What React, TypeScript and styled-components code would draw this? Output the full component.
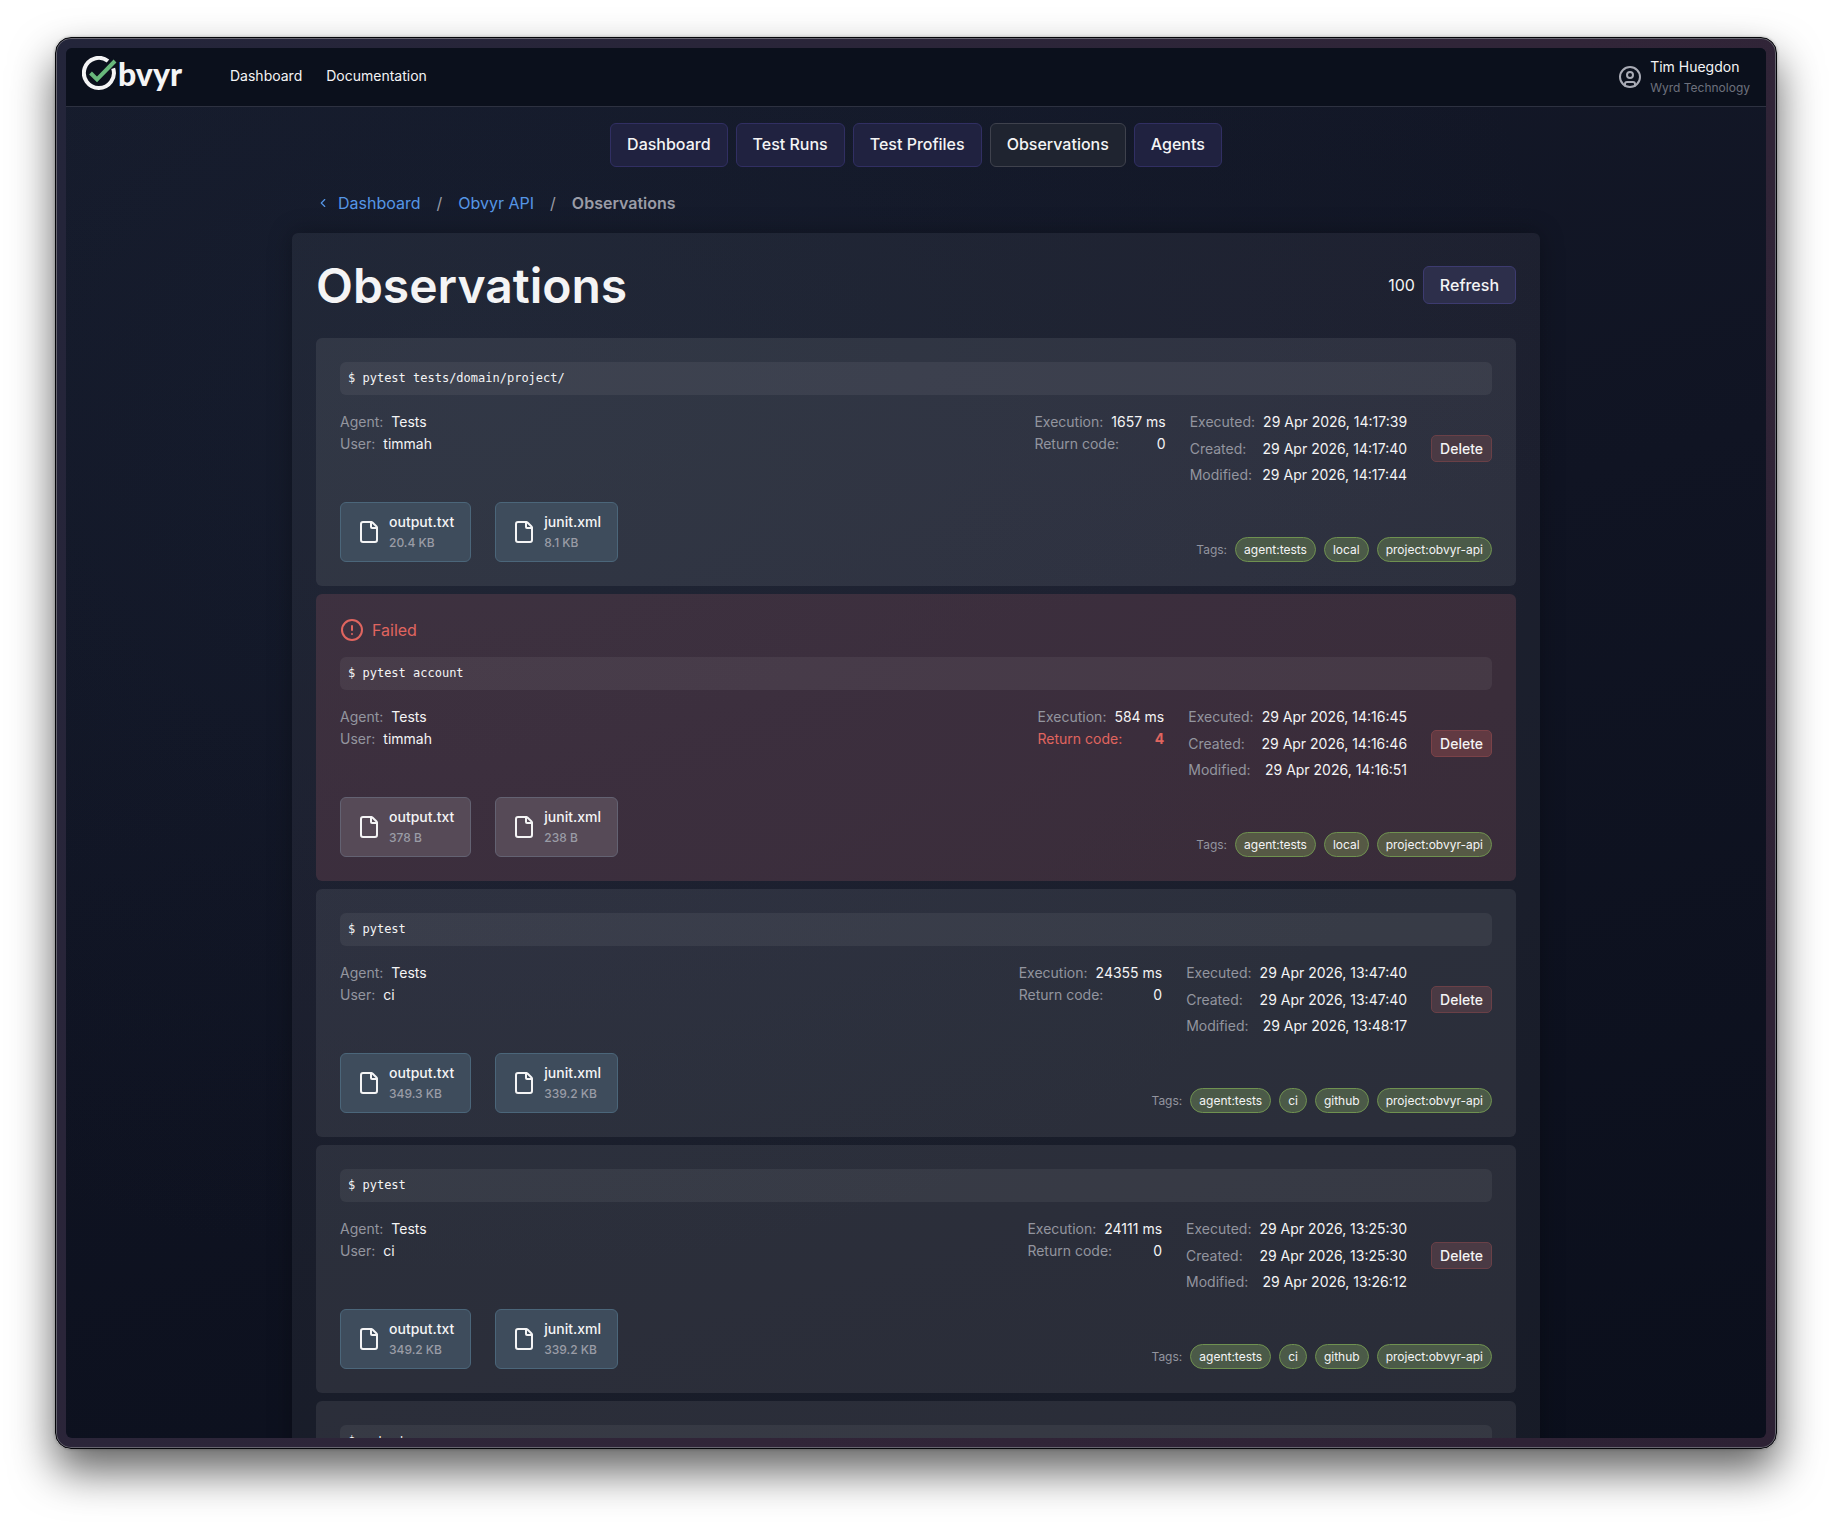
import { ComponentProps } from 'react'
import { ChevronLeft, CircleAlert, CircleUser, File } from 'lucide-react'
import styled, { createGlobalStyle, css } from 'styled-components'

type Artifact = {
  name: string
  size: string
}

type ObservationResult = {
  agent: string
  user: string
  duration: string
  returnCode: number
  executed: string
  created: string
  modified: string
  artifacts: Artifact[]
  tags: string[]
}

type Observation = {
  id: string
  command: string
  result?: ObservationResult
}

const observations: Observation[] = [
  {
    id: 'obs-1',
    command: 'pytest tests/domain/project/',
    result: {
      agent: 'Tests',
      user: 'timmah',
      duration: '1657 ms',
      returnCode: 0,
      executed: '29 Apr 2026, 14:17:39',
      created: '29 Apr 2026, 14:17:40',
      modified: '29 Apr 2026, 14:17:44',
      artifacts: [
        { name: 'output.txt', size: '20.4 KB' },
        { name: 'junit.xml', size: '8.1 KB' },
      ],
      tags: ['agent:tests', 'local', 'project:obvyr-api'],
    },
  },
  {
    id: 'obs-2',
    command: 'pytest account',
    result: {
      agent: 'Tests',
      user: 'timmah',
      duration: '584 ms',
      returnCode: 4,
      executed: '29 Apr 2026, 14:16:45',
      created: '29 Apr 2026, 14:16:46',
      modified: '29 Apr 2026, 14:16:51',
      artifacts: [
        { name: 'output.txt', size: '378 B' },
        { name: 'junit.xml', size: '238 B' },
      ],
      tags: ['agent:tests', 'local', 'project:obvyr-api'],
    },
  },
  {
    id: 'obs-3',
    command: 'pytest',
    result: {
      agent: 'Tests',
      user: 'ci',
      duration: '24355 ms',
      returnCode: 0,
      executed: '29 Apr 2026, 13:47:40',
      created: '29 Apr 2026, 13:47:40',
      modified: '29 Apr 2026, 13:48:17',
      artifacts: [
        { name: 'output.txt', size: '349.3 KB' },
        { name: 'junit.xml', size: '339.2 KB' },
      ],
      tags: ['agent:tests', 'ci', 'github', 'project:obvyr-api'],
    },
  },
  {
    id: 'obs-4',
    command: 'pytest',
    result: {
      agent: 'Tests',
      user: 'ci',
      duration: '24111 ms',
      returnCode: 0,
      executed: '29 Apr 2026, 13:25:30',
      created: '29 Apr 2026, 13:25:30',
      modified: '29 Apr 2026, 13:26:12',
      artifacts: [
        { name: 'output.txt', size: '349.2 KB' },
        { name: 'junit.xml', size: '339.2 KB' },
      ],
      tags: ['agent:tests', 'ci', 'github', 'project:obvyr-api'],
    },
  },
  {
    id: 'obs-5',
    command: 'pytest',
  },
]

const tabs = ['Dashboard', 'Test Runs', 'Test Profiles', 'Observations', 'Agents']

export default function App() {
  return (
    <>
      <GlobalStyle />
      <Desktop>
        <WindowFrame>
          <Screen>
            <Header />
            <Tabs aria-label="Project">
              {tabs.map((tab) => (
                <Tab key={tab} href="#" isActive={tab === 'Observations'}>
                  {tab}
                </Tab>
              ))}
            </Tabs>
            <Content>
              <Breadcrumbs aria-label="Breadcrumb">
                <ChevronLeft size={14} color="#5596e6" aria-hidden />
                <CrumbLink href="#">Dashboard</CrumbLink>
                <CrumbDivider>/</CrumbDivider>
                <CrumbLink href="#">Obvyr API</CrumbLink>
                <CrumbDivider>/</CrumbDivider>
                <CurrentCrumb aria-current="page">Observations</CurrentCrumb>
              </Breadcrumbs>
              <Panel>
                <PanelHeader>
                  <Title>Observations</Title>
                  <PanelActions>
                    <span>100</span>
                    <RefreshButton type="button">Refresh</RefreshButton>
                  </PanelActions>
                </PanelHeader>
                <List>
                  {observations.map((item) => (
                    <ObservationCard key={item.id} {...item} />
                  ))}
                </List>
              </Panel>
            </Content>
          </Screen>
        </WindowFrame>
      </Desktop>
    </>
  )
}

const Header = () => (
  <HeaderContainer>
    <LogoLink href="#" aria-label="Obvyr">
      <LogoMark width="36" height="36" viewBox="0 0 36 36" fill="none" aria-hidden>
        <path d="M26 5A15 15 0 1 0 31.2 12.4" stroke="#f4f4f5" strokeWidth="4" />
        <path d="M8.5 17L15 23.5L33 5" stroke="#68b87b" strokeWidth="4" />
      </LogoMark>
      <LogoText>bvyr</LogoText>
    </LogoLink>
    <HeaderNav>
      <HeaderLink href="#">Dashboard</HeaderLink>
      <HeaderLink href="#">Documentation</HeaderLink>
    </HeaderNav>
    <Account type="button">
      <CircleUser size={24} color="#a9abb5" aria-hidden />
      <AccountText>
        <AccountName>Tim Huegdon</AccountName>
        <AccountOrg>Wyrd Technology</AccountOrg>
      </AccountText>
    </Account>
  </HeaderContainer>
)

type FactProps = ComponentProps<typeof FactRow> & {
  label: string
  value: string | number
}

const Fact = ({ label, value, ...props }: FactProps) => (
  <FactRow {...props}>
    <dt>{label}:</dt>
    <dd>{value}</dd>
  </FactRow>
)

const ObservationCard = ({ command, result }: Observation) => {
  const isFailed = !!result && result.returnCode !== 0

  return (
    <Card isFailed={isFailed}>
      {isFailed && (
        <FailedBanner>
          <CircleAlert size={24} aria-hidden />
          Failed
        </FailedBanner>
      )}
      <Command>$ {command}</Command>
      {result && (
        <>
          <Details>
            <FactList>
              <Fact label="Agent" value={result.agent} />
              <Fact label="User" value={result.user} />
            </FactList>
            <FactList isPushed>
              <Fact isSpread label="Execution" value={result.duration} />
              <Fact
                isSpread
                isError={isFailed}
                label="Return code"
                value={result.returnCode}
              />
            </FactList>
            <FactList isStretched>
              <Fact isSpread label="Executed" value={result.executed} />
              <Fact isSpread label="Created" value={result.created} />
              <Fact isSpread label="Modified" value={result.modified} />
            </FactList>
            <DeleteButton type="button" isFailed={isFailed}>
              Delete
            </DeleteButton>
          </Details>
          <CardFooter>
            <Artifacts>
              {result.artifacts.map(({ name, size }) => (
                <ArtifactLink key={name} href="#" isFailed={isFailed}>
                  <File size={24} aria-hidden />
                  <span>
                    <ArtifactName>{name}</ArtifactName>
                    <ArtifactSize>{size}</ArtifactSize>
                  </span>
                </ArtifactLink>
              ))}
            </Artifacts>
            <Tags>
              <TagsLabel>Tags:</TagsLabel>
              {result.tags.map((tag) => (
                <Tag key={tag} isFailed={isFailed}>
                  {tag}
                </Tag>
              ))}
            </Tags>
          </CardFooter>
        </>
      )}
    </Card>
  )
}

const GlobalStyle = createGlobalStyle`
  * {
    box-sizing: border-box;
  }

  body {
    margin: 0;
    background: #fff;
    color: #f4f4f5;
    font-family: Inter, 'Liberation Sans', sans-serif;
    font-size: 16px;
    line-height: 26px;
  }

  a {
    color: inherit;
    text-decoration: none;
  }

  button {
    color: inherit;
    font: inherit;
    cursor: pointer;
  }
`

const Desktop = styled.div`
  height: 100vh;
  padding: 37px 55px 73px;
  overflow: hidden;
`

const WindowFrame = styled.div`
  display: flex;
  height: 100%;
  padding: 10px;
  border: 1px solid #05060a;
  border-radius: 16px;
  background: linear-gradient(120deg, #23253a, #312538 60%, #2d2134);
  box-shadow:
    inset 0 0 0 1px #66656f,
    0 0 3px rgba(0, 0, 0, 0.3),
    0 22px 44px rgba(0, 0, 0, 0.62);
`

const Screen = styled.div`
  flex: 1;
  min-width: 0;
  overflow: hidden;
  border-radius: 6px;
  background:
    radial-gradient(
      ellipse at 25% 25%,
      rgba(40, 58, 84, 0.14),
      transparent 60%
    ),
    linear-gradient(165deg, #151a2a, #101423 45%, #0b0f1c);
`

const HeaderContainer = styled.header`
  display: flex;
  align-items: center;
  height: 59px;
  padding: 0 16px;
  background: #0b101c;
  border-bottom: 1px solid #2d3140;
`

const LogoLink = styled.a`
  display: flex;
  align-items: center;
  width: 148px;
  margin-bottom: 6px;
`

const LogoMark = styled.svg`
  flex-shrink: 0;
`

const LogoText = styled.span`
  font-family: Lato, Inter, sans-serif;
  font-size: 32px;
  font-weight: 900;
  line-height: 36px;
`

const HeaderNav = styled.nav`
  display: flex;
  gap: 24px;
`

const HeaderLink = styled.a`
  padding-bottom: 2px;
  font-size: 14px;
  line-height: 22px;
`

const Account = styled.button`
  display: flex;
  align-items: center;
  gap: 8px;
  margin-left: auto;
  padding: 0;
  border: 0;
  background: none;
  text-align: left;
`

const AccountText = styled.span`
  display: flex;
  flex-direction: column;
`

const AccountName = styled.span`
  font-size: 14px;
  line-height: 22px;
`

const AccountOrg = styled.span`
  font-size: 12px;
  line-height: 20px;
  color: #6d707c;
`

const Tabs = styled.nav`
  display: flex;
  justify-content: center;
  gap: 8px;
  padding: 16px;
`

const Tab = styled.a.withConfig({
  shouldForwardProp: (prop) => prop !== 'isActive',
})<{ isActive: boolean }>`
  padding: 8px 16px 10px;
  border: 1px solid #312f63;
  border-radius: 6px;
  background: #202240;
  font-weight: 500;
  line-height: 24px;

  ${({ isActive }) =>
    isActive &&
    css`
      border-color: #3f424d;
      background: #1f2430;
    `}
`

const Content = styled.main`
  max-width: 1248px;
  margin: 0 auto;
`

const Breadcrumbs = styled.nav`
  display: flex;
  align-items: center;
  padding: 7px 24px 17px;

  svg {
    margin-right: 8px;
  }
`

const CrumbLink = styled.a`
  color: #5596e6;
`

const CrumbDivider = styled.span`
  padding: 0 16px;
  color: #9a9ca6;
`

const CurrentCrumb = styled.span`
  color: #9a9ca6;
  font-weight: 600;
`

const Panel = styled.section`
  padding: 24px;
  border-radius: 6px;
  background: rgba(255, 255, 255, 0.05);
  box-shadow: 0 0 24px rgba(0, 0, 0, 0.3);
`

const PanelHeader = styled.div`
  display: flex;
  align-items: center;
  justify-content: space-between;
  margin-bottom: 24px;
`

const Title = styled.h1`
  margin: 0;
  font-size: 48px;
  font-weight: 600;
  line-height: 57px;
`

const PanelActions = styled.div`
  display: flex;
  align-items: center;
  gap: 8px;
  padding-bottom: 2px;
`

const RefreshButton = styled.button`
  padding: 5px 16px;
  border: 1px solid #3d3b70;
  border-radius: 6px;
  background: #2d2f4b;
  font-weight: 500;
`

const List = styled.div`
  display: flex;
  flex-direction: column;
  gap: 8px;
`

type FailableProps = { isFailed: boolean }

const Card = styled.article.withConfig({
  shouldForwardProp: (prop) => prop !== 'isFailed',
})<FailableProps>`
  padding: 24px;
  border-radius: 6px;
  background: ${({ isFailed }) =>
    isFailed ? 'rgba(150, 86, 98, 0.25)' : 'rgba(255, 255, 255, 0.08)'};
`

const FailedBanner = styled.div`
  display: flex;
  align-items: center;
  gap: 8px;
  height: 23px;
  margin-bottom: 16px;
  color: #e0655f;
`

const Command = styled.code`
  display: block;
  padding: 0 8px;
  border-radius: 6px;
  background: rgba(255, 255, 255, 0.06);
  font-family: 'DejaVu Sans Mono', 'Liberation Mono', monospace;
  font-size: 12px;
  line-height: 33px;
`

const Details = styled.div`
  display: flex;
  align-items: stretch;
  gap: 24px;
  min-height: 75px;
  margin: 16px 0;
`

const FactList = styled.dl.withConfig({
  shouldForwardProp: (prop) => !['isPushed', 'isStretched'].includes(prop),
})<{ isPushed?: boolean; isStretched?: boolean }>`
  display: flex;
  flex-direction: column;
  justify-content: ${({ isStretched }) =>
    isStretched ? 'space-between' : 'flex-start'};
  margin: 0;
  margin-left: ${({ isPushed }) => (isPushed ? 'auto' : '0')};
  font-size: 14px;
  line-height: 22px;
`

const FactRow = styled.div.withConfig({
  shouldForwardProp: (prop) => !['isSpread', 'isError'].includes(prop),
})<{ isSpread?: boolean; isError?: boolean }>`
  display: flex;
  gap: 8px;
  justify-content: ${({ isSpread }) =>
    isSpread ? 'space-between' : 'flex-start'};

  dt {
    color: #93959f;
  }

  dd {
    margin: 0;
  }

  ${({ isError }) =>
    isError &&
    css`
      dt,
      dd {
        color: #e0655f;
      }

      dd {
        font-weight: 700;
      }
    `}
`

const DeleteButton = styled.button.withConfig({
  shouldForwardProp: (prop) => prop !== 'isFailed',
})<FailableProps>`
  align-self: center;
  padding: 0 8px;
  border: 1px solid ${({ isFailed }) => (isFailed ? '#7b4248' : '#6a4047')};
  border-radius: 5px;
  background: ${({ isFailed }) => (isFailed ? '#613a42' : '#4a3a44')};
  font-size: 14px;
  font-weight: 500;
  line-height: 25px;
`

const CardFooter = styled.div`
  display: flex;
  align-items: flex-end;
  justify-content: space-between;
`

const Artifacts = styled.div`
  display: flex;
  gap: 24px;
`

const ArtifactLink = styled.a.withConfig({
  shouldForwardProp: (prop) => prop !== 'isFailed',
})<FailableProps>`
  display: flex;
  align-items: center;
  gap: 8px;
  padding: 8px 16px;
  border: 1px solid ${({ isFailed }) => (isFailed ? '#636272' : '#4b667a')};
  border-radius: 6px;
  background: ${({ isFailed }) => (isFailed ? '#564a57' : '#3e4c5c')};
`

const ArtifactName = styled.span`
  display: block;
  font-size: 14px;
  font-weight: 500;
  line-height: 22px;
`

const ArtifactSize = styled.span`
  display: block;
  font-size: 12px;
  font-weight: 500;
  line-height: 20px;
  color: #9a9ca6;
`

const Tags = styled.div`
  display: flex;
  align-items: center;
  gap: 8px;
  font-size: 12px;
  line-height: 23px;
`

const TagsLabel = styled.span`
  color: #93959f;
`

const Tag = styled.span.withConfig({
  shouldForwardProp: (prop) => prop !== 'isFailed',
})<FailableProps>`
  padding: 0 8px;
  border: 1px solid #6f9150;
  border-radius: 13px;
  background: ${({ isFailed }) => (isFailed ? '#565945' : '#4b5a48')};
`
